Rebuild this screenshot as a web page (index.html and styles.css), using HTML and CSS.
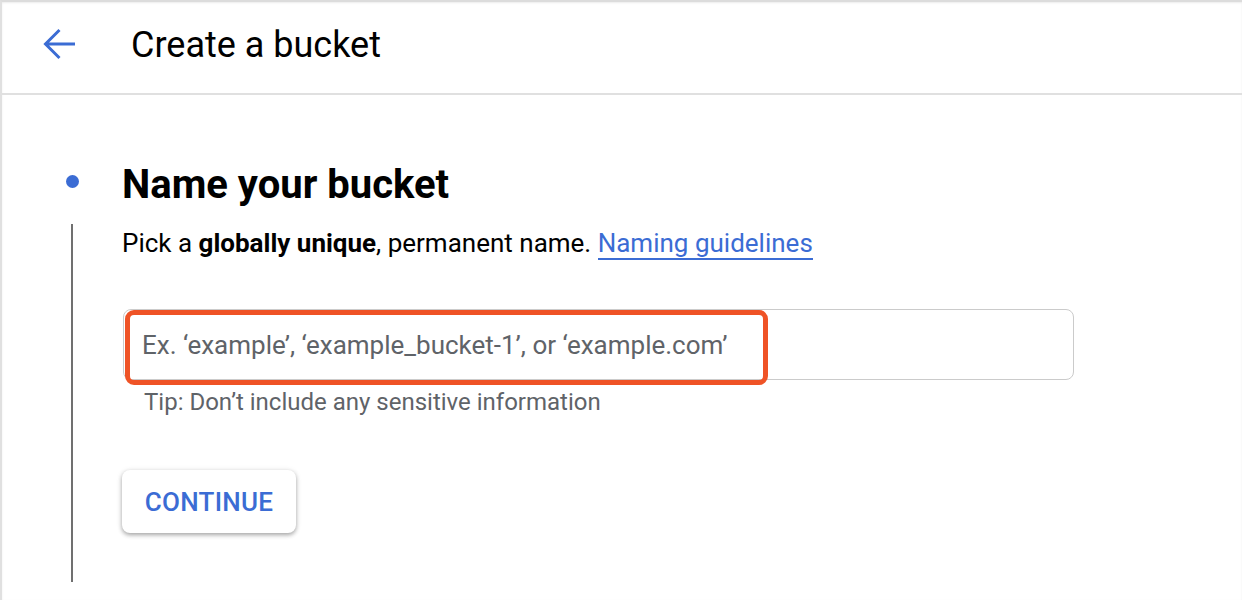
FILE: index.html
```html
<!DOCTYPE html>
<html>
<head>
<meta charset="utf-8">
<link rel="stylesheet" href="styles.css">
</head>
<body>
<div class="page">
  <header class="topbar">
    <span class="back">
      <svg width="34" height="34" viewBox="0 0 34 34"><path d="M33 16H3.5M17.5 2L3.5 16l14 14" fill="none" stroke="#3b6cd4" stroke-width="3"/></svg>
    </span>
    <h1 class="title">Create a bucket</h1>
  </header>
  <main class="step">
    <div class="rail">
      <span class="dot"></span>
      <span class="line"></span>
    </div>
    <div class="content">
      <h2 class="heading">Name your bucket</h2>
      <p class="desc">Pick a <b>globally unique</b>, permanent name. <a class="link" href="#">Naming guidelines</a></p>
      <div class="field">
        <input class="input" type="text" placeholder="Ex. ‘example’, ‘example_bucket-1’, or ‘example.com’">
        <span class="highlight"></span>
      </div>
      <p class="tip">Tip: Don’t include any sensitive information</p>
      <button class="btn">CONTINUE</button>
    </div>
  </main>
</div>
</body>
</html>
```

FILE: styles.css
```css
* { box-sizing: border-box; }
html, body { margin: 0; padding: 0; background: #fff; }
body {
  font-family: Roboto, "Liberation Sans", Arial, sans-serif;
  color: #000;
  height: 600px;
  overflow: hidden;
}
.page {
  height: 600px;
  border-left: 2px solid #e0e0e0;
  border-top: 2px solid #dcdcdc;
  box-shadow: inset 0 1px 2px rgba(0,0,0,0.08);
}
.topbar {
  height: 93px;
  border-bottom: 2px solid #e0e0e0;
  display: flex;
  align-items: center;
  padding-left: 40px;
  padding-bottom: 5px;
}
.back { display: flex; width: 34px; height: 34px; }
.title {
  margin: 0 0 0 55px;
  font-size: 36px;
  font-weight: 400;
  line-height: 40px;
}
.step {
  display: flex;
  padding-left: 63px;
  padding-top: 66px;
}
.rail {
  width: 14px;
  display: flex;
  flex-direction: column;
  align-items: center;
  padding-top: 14px;
}
.dot {
  width: 13px; height: 13px;
  border-radius: 50%;
  background: #3b6cd4;
}
.line {
  width: 2px;
  height: 358px;
  margin-top: 36px;
  background: #707070;
}
.content {
  margin-left: 43px;
  display: flex;
  flex-direction: column;
  align-items: flex-start;
}
.heading {
  margin: 0;
  font-size: 40px;
  font-weight: 700;
  line-height: 48px;
}
.desc {
  margin: 18px 0 0;
  font-size: 26px;
  line-height: 32px;
}
.desc b { font-weight: 700; }
.link {
  color: #3b6cd4;
  text-decoration: none;
  border-bottom: 2px solid #3b6cd4;
}
.field {
  position: relative;
  margin-top: 50px;
  margin-left: 1px;
}
.input {
  display: block;
  width: 951px;
  height: 71px;
  border: 1.5px solid #cbcbcb;
  border-radius: 8px;
  padding: 0 0 0 18px;
  font-family: inherit;
  font-size: 26px;
  outline: none;
}
.input::placeholder { color: #5f6368; }
.highlight {
  position: absolute;
  left: 2px;
  top: 1px;
  width: 643px;
  height: 75px;
  border: 5px solid #ef5326;
  border-radius: 9px;
  pointer-events: none;
}
.tip {
  margin: 7px 0 0 22px;
  font-size: 24px;
  line-height: 30px;
  color: #5f6368;
}
.btn {
  margin-top: 53px;
  width: 174px;
  height: 63px;
  border: none;
  border-radius: 8px;
  background: #fff;
  box-shadow: 0 2px 4px rgba(0,0,0,0.3), 0 1px 6px rgba(0,0,0,0.1);
  font-family: inherit;
  font-size: 26px;
  font-weight: 500;
  color: #3b6cd4;
  letter-spacing: 0.3px;
  padding: 0;
}
```
